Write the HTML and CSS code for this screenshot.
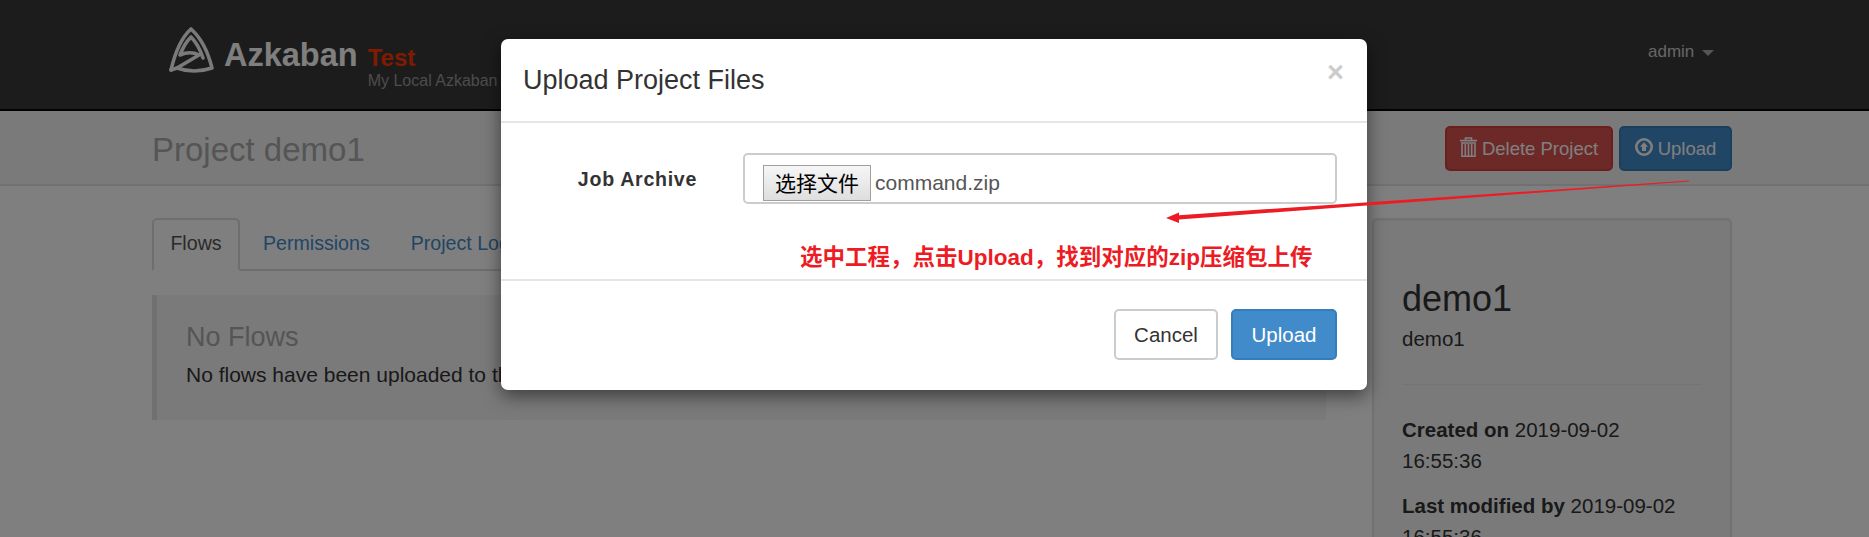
FILE: index.html

```html
<!DOCTYPE html>
<html lang="en">
<head>
  <meta charset="UTF-8" />
  <title>Azkaban - Project demo1</title>
  <link rel="stylesheet" href="styles.css">
</head>
<body>
  <div class="navbar">
    <div class="brand">
      <svg class="logo" viewBox="0 0 70 60" width="70" height="60">
        <path d="M11 50 C15 33 22 17 31 9 C40 17 48 32 52 48 C40 52 28 52 17 48 L39 35 C33 32 27 32 20 35 C23 27 27 21 31 17 C36 22 40 29 43 38" fill="none" stroke="#f4f4f4" stroke-width="3.6" stroke-linejoin="round" stroke-linecap="round"/>
        <path d="M11 50 L17 48" fill="none" stroke="#f4f4f4" stroke-width="3.6" stroke-linecap="round"/>
      </svg>
      <span class="brand-name">Azkaban</span>
      <div class="brand-env">
        <span class="env-name">Test</span>
        <span class="env-desc">My Local Azkaban</span>
      </div>
    </div>
    <div class="user">admin <span class="caret"></span></div>
  </div>

  <div class="page-header">
    <h1>Project demo1</h1>
    <div class="header-btns">
      <a class="btn btn-danger">
        <svg class="icon" viewBox="0 0 17 20" width="17" height="20">
          <path d="M5.5 3 V1 H11.5 V3 M0 3.6 H17" fill="none" stroke="#fff" stroke-width="1.6"/>
          <path d="M2 6 H15 V19.2 H2 Z M5.3 7 V18.5 M8.5 7 V18.5 M11.7 7 V18.5" fill="none" stroke="#fff" stroke-width="1.6"/>
        </svg>
        Delete Project
      </a>
      <a class="btn btn-primary">
        <svg class="icon" viewBox="0 0 18 18" width="18" height="18">
          <circle cx="9" cy="9" r="7.7" fill="none" stroke="#fff" stroke-width="2.6"/>
          <path d="M9 4.2 L13 8.8 H11 V13 H7 V8.8 H5 Z" fill="#fff"/>
        </svg>
        Upload
      </a>
    </div>
  </div>

  <div class="main">
    <div class="left-col">
      <ul class="tabs">
        <li class="active">Flows</li>
        <li>Permissions</li>
        <li>Project Logs</li>
      </ul>
      <div class="callout">
        <h4>No Flows</h4>
        <p>No flows have been uploaded to this project yet.</p>
      </div>
    </div>
    <div class="well">
      <h3>demo1</h3>
      <p class="desc">demo1</p>
      <hr>
      <p><strong>Created on</strong> 2019-09-02<br>16:55:36</p>
      <p><strong>Last modified by</strong> 2019-09-02<br>16:55:36</p>
    </div>
  </div>

  <div class="backdrop"></div>

  <div class="modal">
    <div class="modal-header">
      <h4>Upload Project Files</h4>
      <span class="close">×</span>
    </div>
    <div class="modal-body">
      <div class="form-row">
        <label>Job Archive</label>
        <div class="file-box">
          <span class="file-btn">选择文件</span>
          <span class="file-name">command.zip</span>
        </div>
      </div>
      <div class="note">选中工程&#xFF0C;点击Upload&#xFF0C;找到对应的zip压缩包上传</div>
    </div>
    <div class="modal-footer">
      <a class="btn btn-default">Cancel</a>
      <a class="btn btn-primary">Upload</a>
    </div>
  </div>

  <svg class="arrow" viewBox="0 0 1869 537" width="1869" height="537">
    <path d="M1689 180.5 L1179 215.2 L1179 212.5 L1166 218 L1179 223 L1179 219.4 L1689 181.5 Z" fill="#ed1c24"/>
  </svg>
</body>
</html>
```

FILE: styles.css

```css
html, body {
  height: 537px;
  overflow: hidden;
}
body {
  margin: 0;
  position: relative;
  font-family: "Liberation Sans", Arial, sans-serif;
  font-size: 19.6px;
  line-height: 30px;
  color: #333;
  background: #fff;
}

/* top bar */
.navbar {
  height: 109px;
  padding: 0 152px;
  display: flex;
  justify-content: space-between;
  background: #383838;
  border-bottom: 2px solid #000;
}
.brand {
  display: flex;
  align-items: flex-start;
  padding: 20px 0 0 8px;
}
.brand-name {
  margin: 8px 0 0 -6px;
  font-size: 32.5px;
  font-weight: bold;
  line-height: 54px;
  color: #fff;
}
.brand-env {
  margin-left: 10px;
  padding-top: 25px;
  display: flex;
  flex-direction: column;
}
.env-name {
  font-size: 24px;
  font-weight: bold;
  line-height: 26px;
  color: #ff3601;
}
.env-desc {
  font-size: 16px;
  line-height: 20px;
  color: #999;
  white-space: nowrap;
}
.user {
  padding: 37px 3px 0 0;
  font-size: 17px;
  color: #ccc;
}
.caret {
  display: inline-block;
  margin-left: 3px;
  vertical-align: middle;
  border-top: 6px solid #aaa;
  border-left: 6px solid transparent;
  border-right: 6px solid transparent;
}

/* page header */
.page-header {
  height: 69px;
  padding: 4px 137px 0 152px;
  display: flex;
  justify-content: space-between;
  background: #f5f5f5;
  border-bottom: 2px solid #e3e3e3;
}
.page-header h1 {
  margin: 0;
  font-size: 33px;
  font-weight: normal;
  line-height: 70px;
  color: #aaa;
}
.header-btns {
  display: flex;
  gap: 6px;
  padding-top: 11px;
  align-items: flex-start;
}

/* buttons */
.btn {
  display: inline-flex;
  align-items: center;
  justify-content: center;
  gap: 5px;
  box-sizing: border-box;
  height: 45px;
  border: 2px solid transparent;
  border-radius: 5px;
  font-size: 18.5px;
  color: #fff;
}
.btn-danger {
  width: 168px;
  background: #d9534f;
  border-color: #d43f3a;
}
.btn-primary {
  width: 113px;
  background: #428bca;
  border-color: #357ebd;
}
.btn-default {
  background: #fff;
  border-color: #ccc;
  color: #333;
}
.icon {
  margin-top: -4px;
}

/* main area */
.main {
  box-sizing: border-box;
  height: 351px;
  overflow: hidden;
  display: flex;
  gap: 46px;
  padding: 32px 137px 0 152px;
}
.left-col {
  width: 1174px;
  flex: none;
}
.tabs {
  list-style: none;
  margin: 0 0 24px;
  padding: 0;
  height: 51px;
  display: flex;
  border-bottom: 2px solid #ddd;
}
.tabs li {
  box-sizing: border-box;
  height: 53px;
  padding: 10px 18px 0;
  margin-right: 5px;
  color: #428bca;
}
.tabs li.active {
  width: 88px;
  border: 2px solid #ddd;
  border-bottom-color: #fff;
  border-radius: 5px 5px 0 0;
  padding: 8px 0 0;
  text-align: center;
  color: #555;
}
.callout {
  box-sizing: border-box;
  height: 125px;
  padding: 25px 29px;
  background: #f5f5f5;
  border-left: 5px solid #e0e0e0;
}
.callout h4 {
  margin: 0;
  font-size: 27px;
  font-weight: normal;
  line-height: 34px;
  color: #aaa;
}
.callout p {
  margin: 6px 0 0;
  font-size: 21px;
  color: #333;
}
.well {
  box-sizing: border-box;
  width: 360px;
  height: 400px;
  flex: none;
  padding: 59px 28px 0 28px;
  background: #f5f5f5;
  border: 2px solid #e3e3e3;
  border-radius: 5px;
  box-shadow: inset 0 1px 1px rgba(0,0,0,.05);
  font-size: 20.5px;
  line-height: 31px;
}
.well h3 {
  margin: 0;
  font-size: 36px;
  font-weight: normal;
  line-height: 40px;
}
.well .desc {
  margin: 5px 0 0;
  line-height: 30px;
}
.well hr {
  margin: 30px 0 29px;
  border: 0;
  border-top: 1px solid #e8e8e8;
}
.well p {
  margin: 0 0 14px;
}

/* modal on top of the dimmed page */
.backdrop {
  position: absolute;
  top: 0;
  left: 0;
  width: 100%;
  height: 100%;
  background: rgba(0,0,0,.5);
}
.modal {
  position: absolute;
  top: 39px;
  left: 501px;
  width: 866px;
  height: 351px;
  display: flex;
  flex-direction: column;
  background: #fff;
  border-radius: 7px;
  box-shadow: 0 6px 18px rgba(0,0,0,.5);
}
.modal-header {
  flex: none;
  height: 82px;
  padding: 0 22px;
  display: flex;
  justify-content: space-between;
  align-items: center;
  border-bottom: 2px solid #e5e5e5;
}
.modal-header h4 {
  margin: 0;
  font-size: 27px;
  font-weight: normal;
  color: #333;
}
.close {
  font-size: 29px;
  font-weight: bold;
  margin: -16px 1px 0 0;
  color: #ccc;
}
.modal-body {
  flex: none;
  height: 158px;
  padding-top: 30px;
  box-sizing: border-box;
  border-bottom: 2px solid #e5e5e5;
}
.form-row {
  display: flex;
  align-items: flex-start;
}
.form-row label {
  width: 196px;
  padding-top: 11px;
  box-sizing: border-box;
  text-align: right;
  font-weight: bold;
  letter-spacing: .7px;
}
.file-box {
  box-sizing: border-box;
  width: 594px;
  height: 51px;
  margin-left: 46px;
  padding: 8px 18px 0;
  display: flex;
  align-items: center;
  gap: 3px;
  border: 2px solid #ccc;
  border-radius: 5px;
  color: #555;
}
.file-btn {
  box-sizing: border-box;
  width: 108px;
  height: 36px;
  text-align: center;
  line-height: 33px;
  border: 1px solid #a0a0a0;
  background: linear-gradient(#f6f6f6, #dedede);
  color: #000;
  font-family: "Noto Sans CJK SC", sans-serif;
  font-size: 21px;
}
.file-name {
  margin-left: 1px;
  font-size: 21px;
}
.note {
  margin: 42px 0 0 299px;
  font-family: "Liberation Sans", "Noto Sans CJK SC", sans-serif;
  font-size: 22.5px;
  font-weight: bold;
  line-height: 24px;
  color: #ed1c24;
  white-space: nowrap;
}
.modal-footer {
  flex: 1;
  display: flex;
  justify-content: flex-end;
  align-items: flex-start;
  gap: 13px;
  padding: 28px 30px 0;
}
.modal-footer .btn {
  width: 104px;
  height: 51px;
  font-size: 20.5px;
}
.modal-footer .btn-primary {
  width: 106px;
}
.arrow {
  position: absolute;
  top: 0;
  left: 0;
}
```
